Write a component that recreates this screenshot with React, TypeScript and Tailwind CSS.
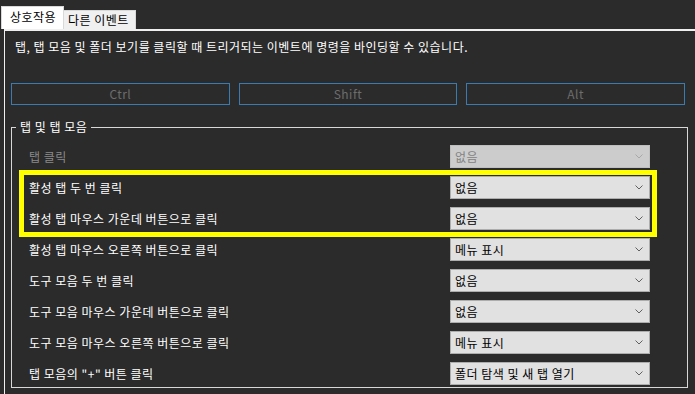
const FONT = "font-['Malgun_Gothic','Noto_Sans_CJK_KR',sans-serif]";

type Row = { label: string; value: string; disabled?: boolean };

const rows: Row[] = [
  { label: "탭 클릭", value: "없음", disabled: true },
  { label: "활성 탭 두 번 클릭", value: "없음" },
  { label: "활성 탭 마우스 가운데 버튼으로 클릭", value: "없음" },
  { label: "활성 탭 마우스 오른쪽 버튼으로 클릭", value: "메뉴 표시" },
  { label: "도구 모음 두 번 클릭", value: "없음" },
  { label: "도구 모음 마우스 가운데 버튼으로 클릭", value: "없음" },
  { label: "도구 모음 마우스 오른쪽 버튼으로 클릭", value: "메뉴 표시" },
  { label: "탭 모음의 \"+\" 버튼 클릭", value: "폴더 탐색 및 새 탭 열기" },
];

function Chevron({ color }: { color: string }) {
  return (
    <svg width="8" height="5" viewBox="0 0 8 5" fill="none">
      <path d="M0.5 0.5 L4 4 L7.5 0.5" stroke={color} strokeWidth="1" />
    </svg>
  );
}

function Dropdown({ value, disabled }: { value: string; disabled?: boolean }) {
  return (
    <div
      className={`h-[23px] w-[200px] flex items-center justify-between pl-[4px] pr-[6px] border text-[12px] leading-[16px] ${
        disabled
          ? "bg-[#cccccc] border-[#bfbfbf] text-[#838383]"
          : "bg-[#e1e1e1] border-[#adadad] text-black"
      }`}
    >
      <span>{value}</span>
      <Chevron color={disabled ? "#a8a8a8" : "#606060"} />
    </div>
  );
}

export default function App() {
  return (
    <div className={`w-[695px] h-[394px] bg-[#2b2b2b] overflow-hidden tracking-[0.5px] ${FONT}`}>
      {/* Tabs */}
      <div className="h-[29px] flex items-end pl-px text-[12px] leading-[16px]">
        <div className="h-[23px] w-[63px] bg-white border-t border-l border-r border-[#d9d9d9] text-black pl-[8px] pt-[2px]">
          상호작용
        </div>
        <div className="h-[19px] w-[72px] bg-[#f0f0f0] border-t border-r border-[#d9d9d9] text-black pl-[4px] pt-[1px]">
          다른 이벤트
        </div>
      </div>

      {/* Panel */}
      <div className="relative ml-[4px] h-[365px] border-l border-t-2 border-[#f0f0f0]">
        <p className="pl-[10px] pt-[8px] text-[12px] leading-[16px] text-white">
          탭, 탭 모음 및 폴더 보기를 클릭할 때 트리거되는 이벤트에 명령을 바인딩할 수 있습니다.
        </p>

        <div className="mt-[28px] ml-[6px] mr-[10px] grid grid-cols-3 gap-[9px]">
          {["Ctrl", "Shift", "Alt"].map((k) => (
            <div
              key={k}
              className="h-[22px] border border-[#3a7bb0] flex items-center justify-center text-[12px] text-[#6d6d6d]"
            >
              {k}
            </div>
          ))}
        </div>

        <fieldset className="mt-[14px] ml-[6px] mr-[7px] border border-[#d8d8d8] pt-[10px] pb-[2px]">
          <legend className="ml-[4px] px-[4px] text-[12px] leading-[16px] text-white">탭 및 탭 모음</legend>
          <div className="flex flex-col gap-[8px]">
            {rows.map((r) => (
              <div key={r.label} className="flex items-center">
                <div
                  className={`w-[438px] pl-[17px] text-[12px] leading-[16px] ${
                    r.disabled ? "text-[#8a8a8a]" : "text-white"
                  }`}
                >
                  {r.label}
                </div>
                <Dropdown value={r.value} disabled={r.disabled} />
              </div>
            ))}
          </div>
        </fieldset>

        {/* highlight annotation */}
        <div className="absolute left-[14px] top-[139px] w-[638px] h-[67px] border-[5px] border-[#ffff00] pointer-events-none" />
      </div>
    </div>
  );
}
